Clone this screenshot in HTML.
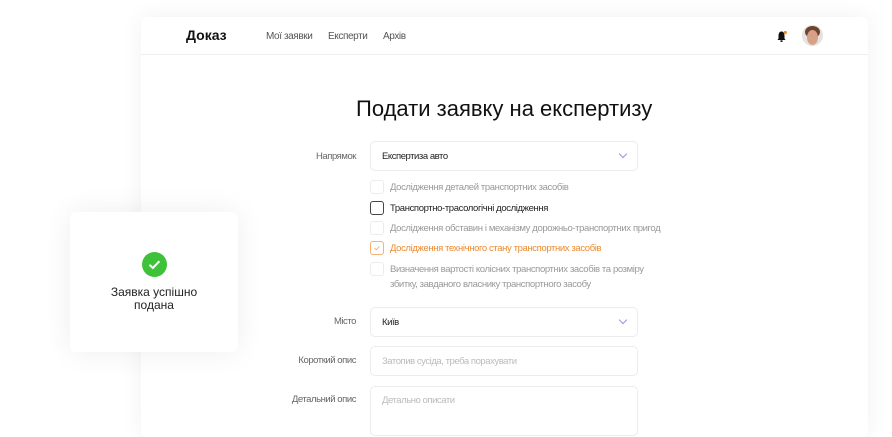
<!DOCTYPE html>
<html><head><meta charset="utf-8"><style>
*{box-sizing:border-box;margin:0;padding:0}
body{width:892px;height:419px;overflow:hidden;background:#fff;font-family:"Liberation Sans",sans-serif;position:relative}
.main{position:absolute;left:141px;top:17px;width:727px;height:420px;background:#fff;box-shadow:0 0 24px rgba(0,0,0,0.06);border-radius:6px}
.abs{position:absolute;white-space:nowrap}
.nav{font-size:10px;color:#555;letter-spacing:-0.4px}
.lbl{font-size:9.5px;color:#666;right:536px;text-align:right;letter-spacing:-0.45px}
.inp{position:absolute;left:370px;width:268px;border:1px solid #ececec;border-radius:5px;background:#fff}
.inp span{position:absolute;left:11px;font-size:9.5px;letter-spacing:-0.45px}
.chev{position:absolute;right:11px;width:6px;height:6px;border-right:1.2px solid #a98be6;border-bottom:1.2px solid #a98be6;transform:rotate(45deg)}
.cb{position:absolute;left:370px;width:14px;height:14px;border:1px solid #ececec;border-radius:3px}
.ct{position:absolute;left:390px;font-size:9.5px;color:#999;white-space:nowrap;letter-spacing:-0.38px}
.card{position:absolute;left:70px;top:212px;width:168px;height:140px;background:#fff;border-radius:6px;box-shadow:0 0 30px rgba(0,0,0,0.07)}
</style></head><body>
<div class="main"></div>
<div class="abs" style="left:141px;top:54px;width:727px;border-top:1px solid #eee"></div>
<div class="abs" style="left:186px;top:27px;font-size:14px;font-weight:bold;color:#111">Доказ</div>
<div class="abs nav" style="left:266px;top:31px">Мої заявки</div>
<div class="abs nav" style="left:328px;top:31px">Експерти</div>
<div class="abs nav" style="left:383px;top:31px">Архів</div>
<svg class="abs" style="left:776px;top:30px" width="12" height="13" viewBox="0 0 12 13"><path d="M5 1.5C3 2 2.5 4 2.5 6v2.5L1.5 10h8L8.5 8.5V6C8.5 4 8 2 6 1.5z" fill="#111"/><rect x="4.3" y="10.3" width="2.4" height="1.6" rx="0.8" fill="#111"/><circle cx="9.3" cy="2.5" r="1.6" fill="#f08a24"/></svg>
<div class="abs" style="left:802px;top:25px;width:21px;height:21px;border-radius:50%;overflow:hidden;background:#e6e2df">
<div style="position:absolute;left:3px;top:1px;width:15px;height:12px;border-radius:50%;background:#6e432f"></div>
<div style="position:absolute;left:5px;top:5px;width:11px;height:15px;border-radius:50%;background:#d6a187"></div>
</div>

<div class="abs" style="left:356px;top:96px;font-size:22px;color:#111">Подати заявку на експертизу</div>

<div class="abs lbl" style="top:151px">Напрямок</div>
<div class="inp" style="top:141px;height:30px"><span style="top:9px;color:#222">Експертиза авто</span><i class="chev" style="top:9px"></i></div>

<div class="cb" style="top:180px"></div><div class="ct" style="top:182px">Дослідження деталей транспортних засобів</div>
<div class="cb" style="top:201px;border:1.2px solid #444"></div><div class="ct" style="top:203px;color:#222">Транспортно-трасологічні дослідження</div>
<div class="cb" style="top:221px"></div><div class="ct" style="top:223px">Дослідження обставин і механізму дорожньо-транспортних пригод</div>
<div class="cb" style="top:241px;border-color:#f3b27a"><svg width="12" height="12" viewBox="0 0 12 12" style="position:absolute;left:0;top:0"><path d="M3.5 6.2l1.8 1.6 3.2-3.4" fill="none" stroke="#f3b27a" stroke-width="1"/></svg></div><div class="ct" style="top:243px;color:#ec8a2f">Дослідження технічного стану транспортних засобів</div>
<div class="cb" style="top:262px"></div><div class="ct" style="top:264px">Визначення вартості колісних транспортних засобів та розміру</div>
<div class="ct" style="top:279px">збитку, завданого власнику транспортного засобу</div>

<div class="abs lbl" style="top:316px">Місто</div>
<div class="inp" style="top:307px;height:30px"><span style="top:9px;color:#222">Київ</span><i class="chev" style="top:9px"></i></div>
<div class="abs lbl" style="top:355px">Короткий опис</div>
<div class="inp" style="top:346px;height:30px"><span style="top:9px;color:#bbb">Затопив сусіда, треба порахувати</span></div>
<div class="abs lbl" style="top:394px">Детальний опис</div>
<div class="inp" style="top:386px;height:50px"><span style="top:8px;color:#bbb">Детально описати</span></div>

<div class="card"></div>
<div class="abs" style="left:142px;top:252px;width:25px;height:25px;border-radius:50%;background:#3ec23a"><svg width="25" height="25" viewBox="0 0 25 25"><path d="M7.5 12.8l3.4 3.2 6.5-6.8" fill="none" stroke="#fff" stroke-width="2"/></svg></div>
<div class="abs" style="left:70px;top:286px;width:168px;text-align:center;font-size:12px;line-height:13px;color:#222;white-space:normal">Заявка успішно<br>подана</div>
</body></html>
